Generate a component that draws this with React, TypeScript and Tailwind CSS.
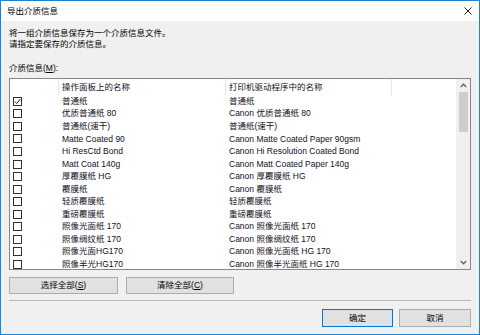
import React from "react";

const rows: [string, string, boolean][] = [
  ["普通纸", "普通纸", true],
  ["优质普通纸 80", "Canon 优质普通纸 80", false],
  ["普通纸(速干)", "普通纸(速干)", false],
  ["Matte Coated 90", "Canon Matte Coated Paper 90gsm", false],
  ["Hi ResCtd Bond", "Canon Hi Resolution Coated Bond", false],
  ["Matt Coat 140g", "Canon Matt Coated Paper 140g", false],
  ["厚覆膜纸 HG", "Canon 厚覆膜纸 HG", false],
  ["覆膜纸", "Canon 覆膜纸", false],
  ["轻质覆膜纸", "轻质覆膜纸", false],
  ["重磅覆膜纸", "重磅覆膜纸", false],
  ["照像光面纸 170", "Canon 照像光面纸 170", false],
  ["照像绸纹纸 170", "Canon 照像绸纹纸 170", false],
  ["照像光面HG170", "Canon 照像光面纸 HG 170", false],
  ["照像半光HG170", "Canon 照像半光面纸 HG 170", false],
];

function CheckBox({ checked }: { checked: boolean }) {
  return (
    <div className="w-[9px] h-[9px] border border-[#333333] bg-white flex items-center justify-center">
      {checked && (
        <svg width="7" height="7" viewBox="0 0 7 7">
          <polyline points="0.8,3.6 2.7,5.5 6.3,1.2" fill="none" stroke="#222" strokeWidth="1" />
        </svg>
      )}
    </div>
  );
}

export default function App() {
  return (
    <div
      className="w-[480px] h-[335px] border border-[#1883d7] bg-[#f0f0f0] flex flex-col text-[8.5px] text-black overflow-hidden"
      style={{ fontFamily: '"Liberation Sans", "Noto Sans CJK SC", sans-serif' }}
    >
      <div className="h-[20px] bg-white flex items-center justify-between pl-[6px] pr-[7px] shrink-0">
        <span className="leading-[11px]">导出介质信息</span>
        <svg width="8" height="8" viewBox="0 0 8 8">
          <path d="M0.5 0.5 L7.5 7.5 M7.5 0.5 L0.5 7.5" stroke="#222" strokeWidth="1" />
        </svg>
      </div>
      <div className="flex flex-col px-[8px] pt-[7px]">
        <div className="leading-[11px]">将一组介质信息保存为一个介质信息文件。</div>
        <div className="leading-[11px]">请指定要保存的介质信息。</div>
        <div className="leading-[11px] mt-[13px]">
          介质信息(<span className="underline">M</span>):
        </div>
        <div className="mt-[4px] h-[192px] border border-[#828790] bg-white flex overflow-hidden">
          <div className="flex-1 flex flex-col overflow-hidden text-[#111122]">
            <div className="h-[16px] flex shrink-0">
              <div className="w-[49px] border-r border-[#e5e5e5]" />
              <div className="w-[167px] border-r border-[#e5e5e5] pl-[3px] flex items-center">操作面板上的名称</div>
              <div className="w-[166px] border-r border-[#e5e5e5] pl-[3px] flex items-center">打印机驱动程序中的名称</div>
              <div className="flex-1" />
            </div>
            {rows.map(([a, b, c], i) => (
              <div key={i} className="h-[12.56px] flex items-center shrink-0 whitespace-nowrap">
                <div className="w-[49px] pl-[3px] flex items-center">
                  <CheckBox checked={c} />
                </div>
                <div className="w-[167px] pl-[3px]">{a}</div>
                <div className="w-[166px] pl-[3px]">{b}</div>
              </div>
            ))}
          </div>
          <div className="w-[14px] bg-[#f0f0f0] flex flex-col items-center shrink-0">
            <div className="h-[13px] flex items-center justify-center">
              <svg width="7" height="5" viewBox="0 0 7 5">
                <polyline points="0.8,4 3.5,1.2 6.2,4" fill="none" stroke="#606060" strokeWidth="1.3" />
              </svg>
            </div>
            <div className="w-[9px] h-[40px] bg-[#cdcdcd]" />
            <div className="flex-1" />
            <div className="h-[13px] flex items-center justify-center">
              <svg width="7" height="5" viewBox="0 0 7 5">
                <polyline points="0.8,1 3.5,3.8 6.2,1" fill="none" stroke="#606060" strokeWidth="1.3" />
              </svg>
            </div>
          </div>
        </div>
        <div className="mt-[7px] flex gap-[8px]">
          <div className="w-[109px] h-[17px] bg-[#e1e1e1] border border-[#adadad] flex items-center justify-center">
            选择全部(<span className="underline">S</span>)
          </div>
          <div className="w-[108px] h-[17px] bg-[#e1e1e1] border border-[#adadad] flex items-center justify-center">
            清除全部(<span className="underline">C</span>)
          </div>
        </div>
        <div className="mt-[6px] h-px bg-[#b9b9b9]" />
        <div className="mt-[8px] flex justify-end gap-[6px]">
          <div className="w-[71px] h-[18px] bg-[#e1e1e1] border border-[#0078d7] flex items-center justify-center">
            确定
          </div>
          <div className="w-[72px] h-[18px] bg-[#e1e1e1] border border-[#adadad] flex items-center justify-center">
            取消
          </div>
        </div>
      </div>
    </div>
  );
}
